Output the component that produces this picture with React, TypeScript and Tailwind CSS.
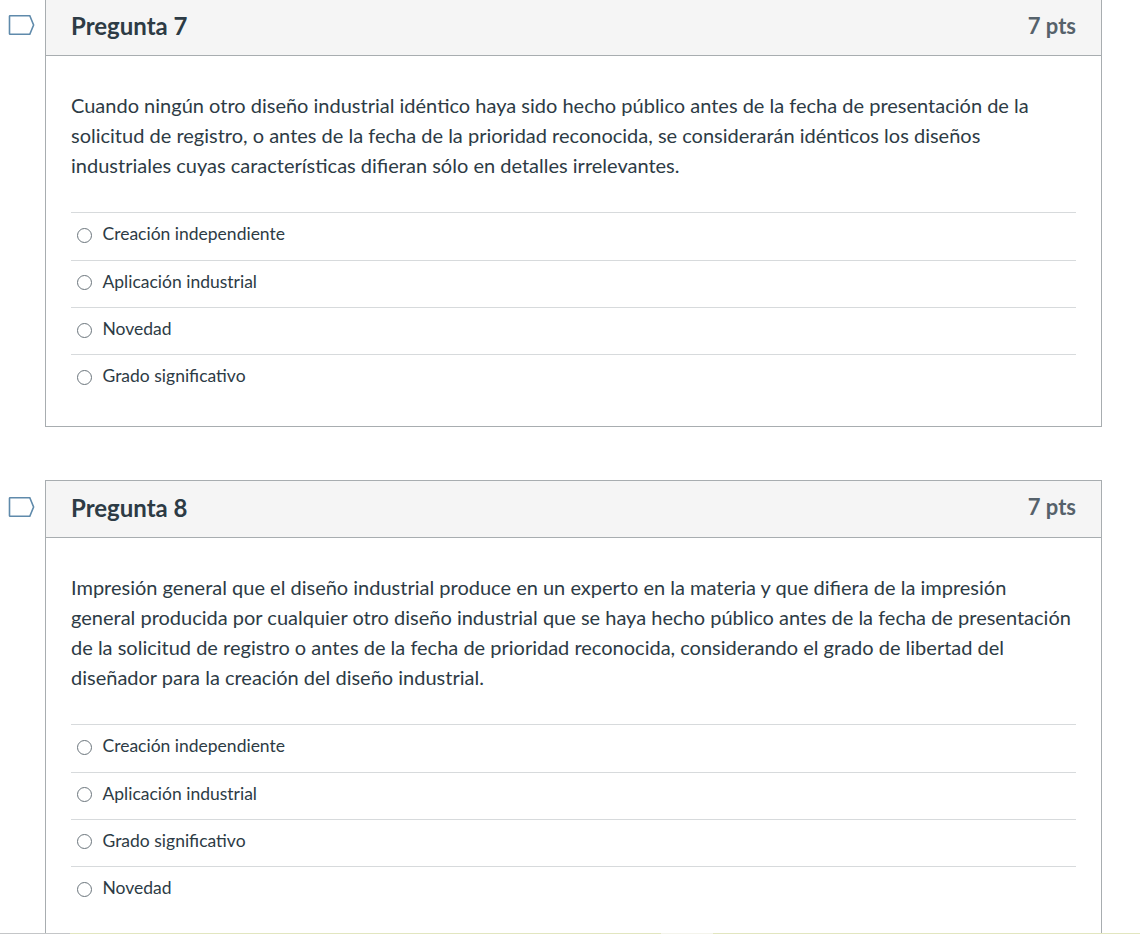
import React from 'react'

const font = "font-['Lato',sans-serif]"

const Bookmark = () => (
  <svg width="27" height="22" viewBox="0 0 27 22" fill="none" className="absolute left-[8px] top-[16px]">
    <path d="M2 1.7H21.8L25.6 11L21.8 20.3H2C1.6 20.3 1.5 20 1.5 19.7V2.3C1.5 2 1.6 1.7 2 1.7Z" stroke="#5f8aab" strokeWidth="1.6" />
  </svg>
)

const Question = ({ title, text, answers, clip }: { title: string; text: string[]; answers: string[]; clip?: boolean }) => (
  <div className="relative">
    <Bookmark />
    <div className={`ml-[45px] w-[1057px] border border-[#a8adb0] bg-white ${clip ? 'border-b-0' : ''}`}>
      <div className="flex h-[57px] items-center justify-between border-b border-[#a8adb0] bg-[#f5f5f5] px-[25px] pb-[2px]">
        <h2 className="text-[24px] font-bold text-[#2d3b45]">{title}</h2>
        <span className="pb-[2px] text-[22px] font-bold text-[#56626b]">7 pts</span>
      </div>
      <div className="px-[25px] pt-[34px] pb-[24.8px]">
        <div className="text-[20px] leading-[30px] text-[#2d3b45]">
          {text.map((line) => (
            <p key={line} className="whitespace-nowrap">{line}</p>
          ))}
        </div>
        <div className="mt-[32.2px]">
          {answers.map((a) => (
            <div key={a} className="flex h-[47.33px] items-center border-t border-[#d7dadc] pl-[6px]">
              <span className="mr-[10.5px] mb-[2px] h-[15px] w-[15px] rounded-full border-[1.25px] border-[#6b757c] bg-white" />
              <span className="pb-[4px] text-[17.5px] text-[#2d3b45]">{a}</span>
            </div>
          ))}
        </div>
      </div>
    </div>
  </div>
)

export default function App() {
  return (
    <div className={`${font} relative h-[934px] w-[1140px] overflow-hidden bg-white`}>
      <div className="-mt-[2px]">
        <Question
          title="Pregunta 7"
          text={[
            'Cuando ningún otro diseño industrial idéntico haya sido hecho público antes de la fecha de presentación de la',
            'solicitud de registro, o antes de la fecha de la prioridad reconocida, se considerarán idénticos los diseños',
            'industriales cuyas características difieran sólo en detalles irrelevantes.',
          ]}
          answers={['Creación independiente', 'Aplicación industrial', 'Novedad', 'Grado significativo']}
        />
        <div className="h-[52.7px]" />
        <Question
          title="Pregunta 8"
          text={[
            'Impresión general que el diseño industrial produce en un experto en la materia y que difiera de la impresión',
            'general producida por cualquier otro diseño industrial que se haya hecho público antes de la fecha de presentación',
            'de la solicitud de registro o antes de la fecha de prioridad reconocida, considerando el grado de libertad del',
            'diseñador para la creación del diseño industrial.',
          ]}
          answers={['Creación independiente', 'Aplicación industrial', 'Grado significativo', 'Novedad']}
          clip
        />
      </div>
      {/* thin strip along the bottom edge of the window */}
      <div className="absolute bottom-0 left-0 flex h-[1px] w-full">
        <div className="w-[70px] bg-[#c4c6c8]" />
        <div className="w-[591px] bg-[#e2e6c0]" />
        <div className="w-[52px] bg-[#f4f4ec]" />
        <div className="flex-1 bg-[#e2e6c0]" />
      </div>
    </div>
  )
}
